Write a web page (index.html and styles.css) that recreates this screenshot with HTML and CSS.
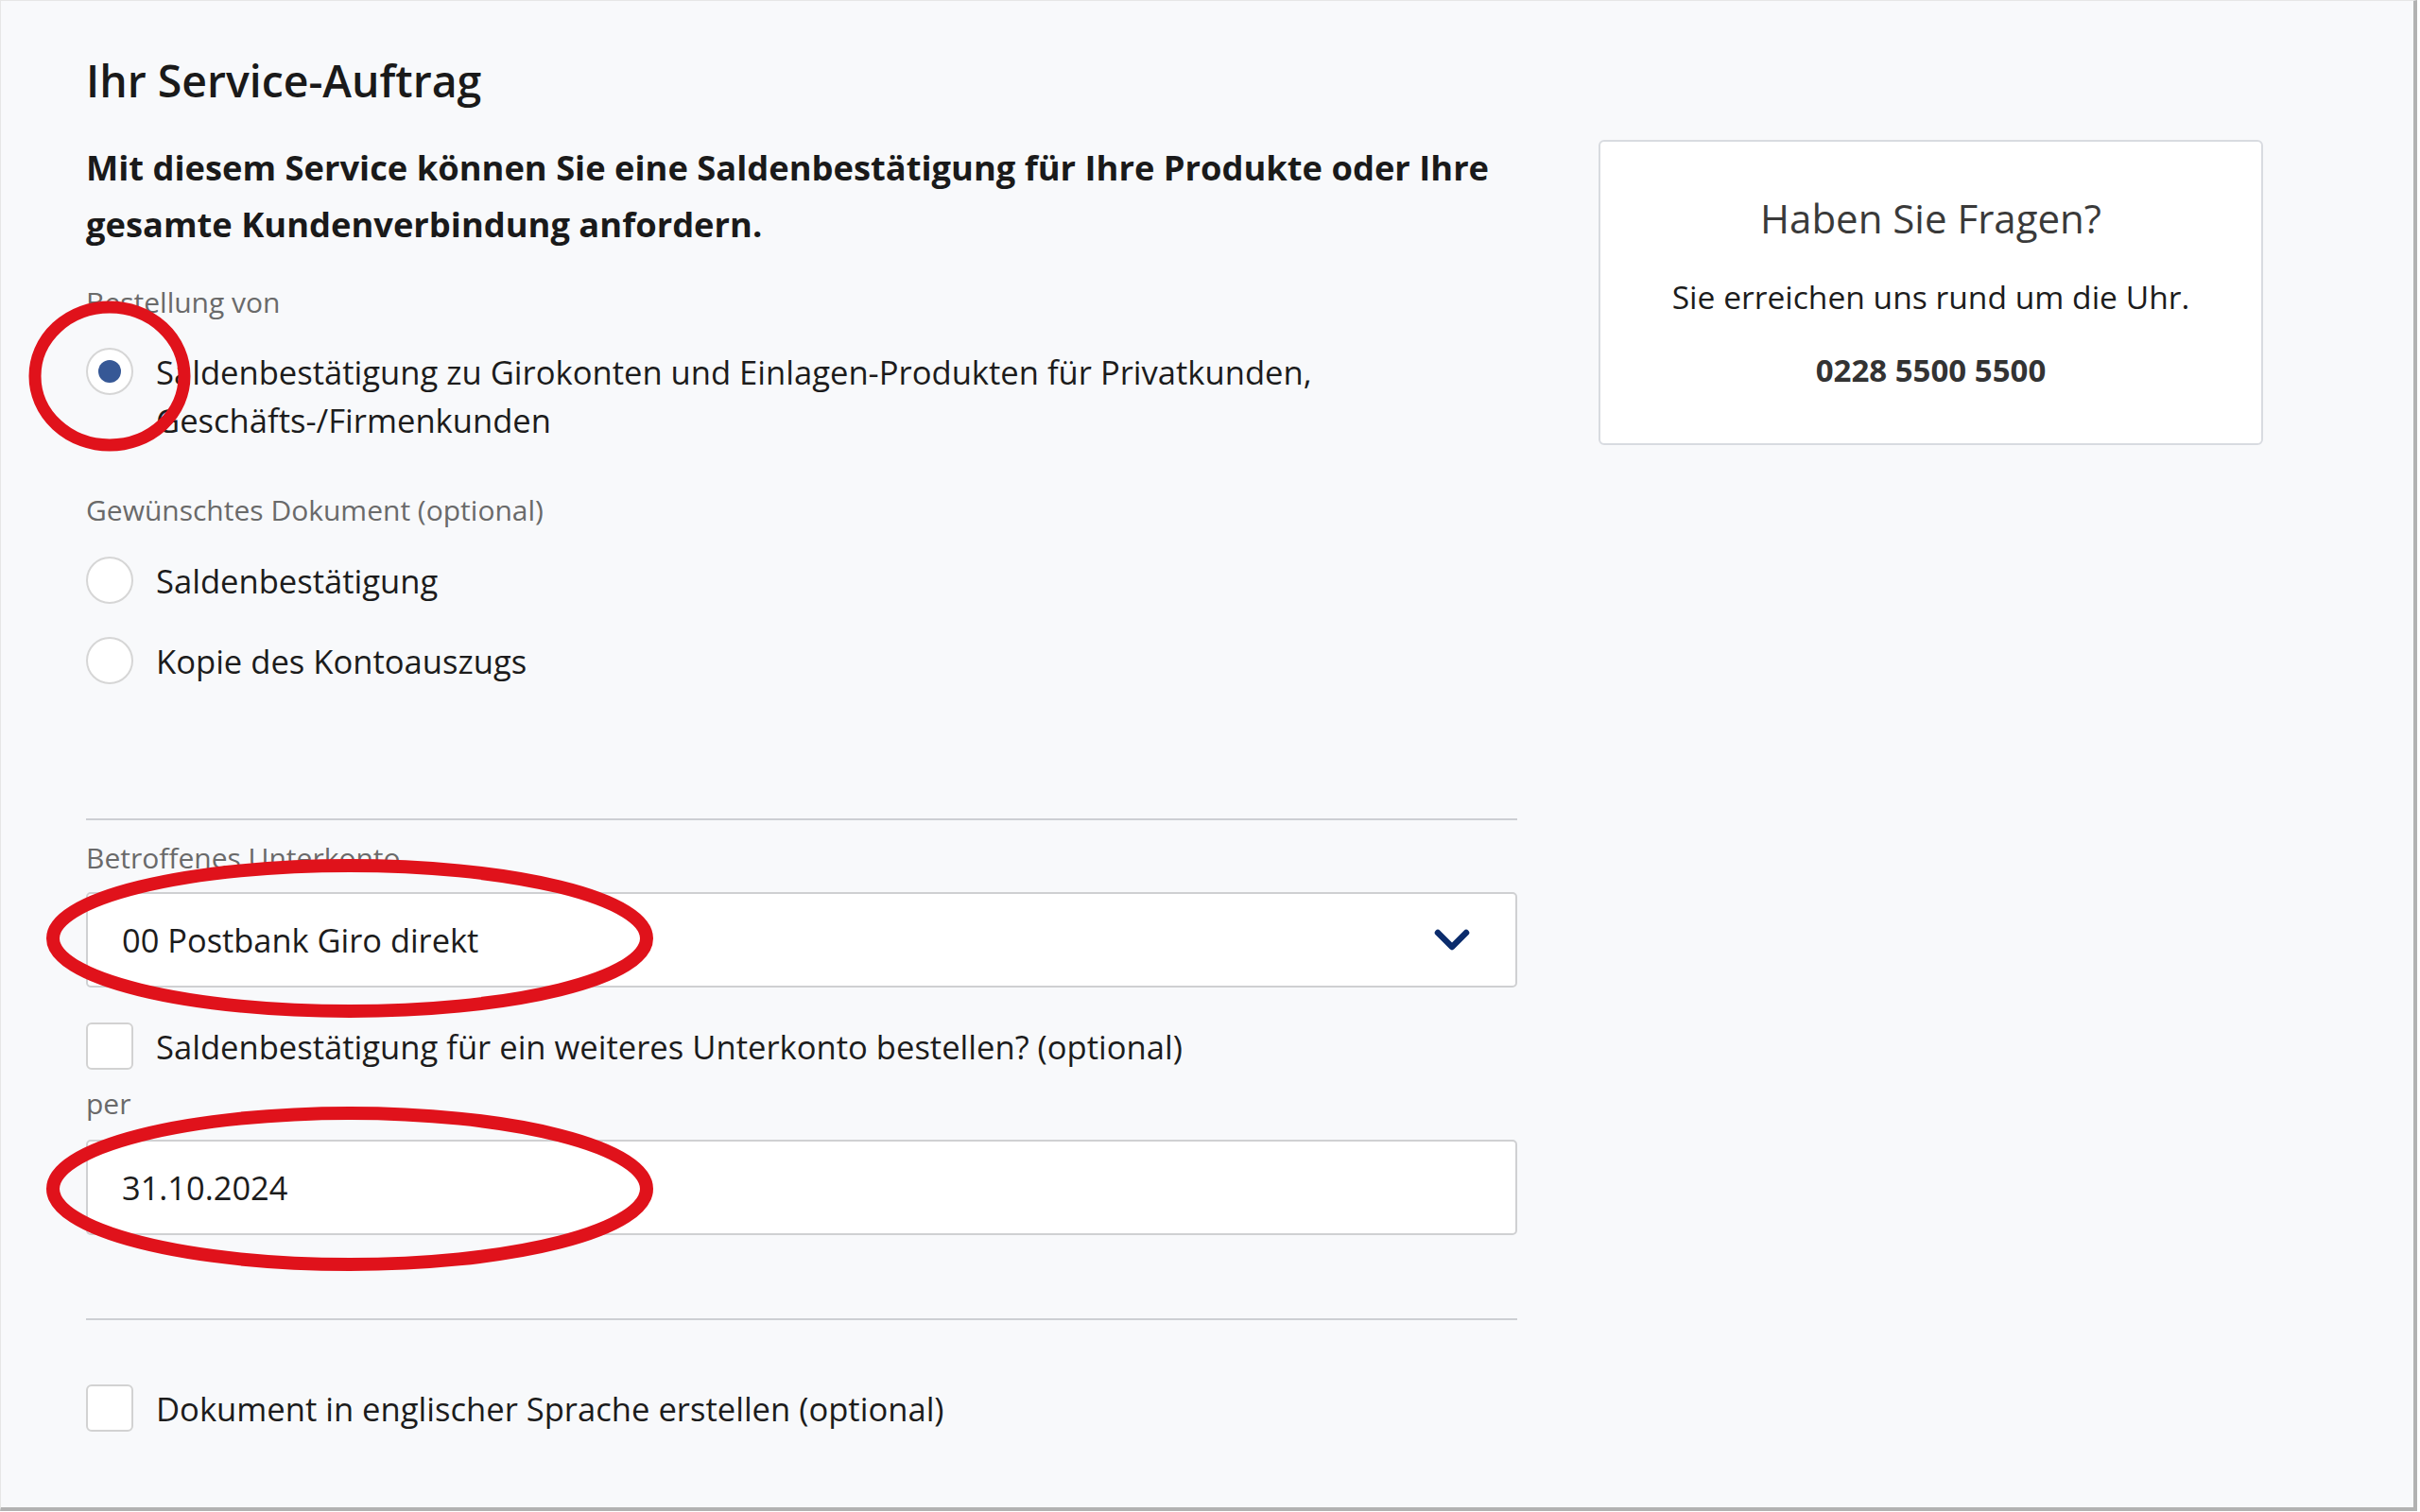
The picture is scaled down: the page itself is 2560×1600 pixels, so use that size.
FILE: index.html
```html
<!DOCTYPE html>
<html lang="de">
  <head>
    <meta charset="UTF-8" />
    <meta name="viewport" content="width=device-width, initial-scale=1.0" />
    <title>Ihr Service-Auftrag</title>
    <link rel="stylesheet" href="styles.css">
  </head>
  <body>
    <div class="frame">
      <div class="page">
        <!-- Formular -->
        <main class="main">
          <h1 class="title">Ihr Service-Auftrag</h1>
          <p class="intro">Mit diesem Service können Sie eine Saldenbestätigung für Ihre Produkte oder Ihre gesamte Kundenverbindung anfordern.</p>

          <div class="label label-order">Bestellung von</div>
          <label class="option option-first">
            <span class="radio checked"></span>
            <span class="option-text">Saldenbestätigung zu Girokonten und Einlagen-Produkten für Privatkunden, Geschäfts-/Firmenkunden</span>
          </label>

          <div class="label label-doc">Gewünschtes Dokument (optional)</div>
          <label class="option option-doc">
            <span class="radio"></span>
            <span class="option-text">Saldenbestätigung</span>
          </label>
          <label class="option option-copy">
            <span class="radio"></span>
            <span class="option-text">Kopie des Kontoauszugs</span>
          </label>

          <hr class="divider divider-top">

          <div class="label label-account">Betroffenes Unterkonto</div>
          <div class="field select">
            <span>00 Postbank Giro direkt</span>
            <svg class="chevron" width="38" height="24" viewBox="0 0 38 24">
              <path d="M4 4 L19 19 L34 4" fill="none" stroke="#0b2c6c" stroke-width="6.5" stroke-linecap="round" stroke-linejoin="round"/>
            </svg>
          </div>

          <label class="option option-more">
            <span class="checkbox"></span>
            <span class="option-text">Saldenbestätigung für ein weiteres Unterkonto bestellen? (optional)</span>
          </label>

          <div class="label label-per">per</div>
          <div class="field date">31.10.2024</div>

          <hr class="divider divider-bottom">

          <label class="option option-english">
            <span class="checkbox"></span>
            <span class="option-text">Dokument in englischer Sprache erstellen (optional)</span>
          </label>
        </main>

        <!-- Kontakt -->
        <aside class="help">
          <div class="help-title">Haben Sie Fragen?</div>
          <div class="help-text">Sie erreichen uns rund um die Uhr.</div>
          <div class="help-phone">0228 5500 5500</div>
        </aside>
      </div>

      <!-- rote Markierungen -->
      <svg class="marks" width="2560" height="1600" viewBox="0 0 2560 1600">
        <ellipse cx="116" cy="398" rx="79" ry="73" fill="none" stroke="#e0121b" stroke-width="13"/>
        <ellipse cx="370" cy="993" rx="314" ry="77" fill="none" stroke="#e0121b" stroke-width="14"/>
        <ellipse cx="370" cy="1258" rx="314" ry="80" fill="none" stroke="#e0121b" stroke-width="14"/>
      </svg>
    </div>
  </body>
</html>
```

FILE: styles.css
```css
body {
  margin: 0;
  background: #ffffff;
  font-family: 'Open Sans', 'Noto Sans', sans-serif;
  color: #1c1c1c;
}

.frame {
  position: relative;
  box-sizing: border-box;
  width: 2557px;
  height: 1599px;
  background: #f8f9fb;
  border-left: 1px solid #e6e6e6;
  border-top: 1px solid #e6e6e6;
  border-right: 4px solid #b2b2b2;
  border-bottom: 4px solid #b2b2b2;
  overflow: hidden;
}

.page {
  display: flex;
  gap: 86px;
  padding-left: 90px;
}

.main {
  width: 1514px;
  padding-top: 54px;
}

.title {
  margin: 0;
  font-size: 46.4px;
  line-height: 60px;
  font-weight: 600;
  color: #1a1a1a;
}

.intro {
  margin: 32px 0 0;
  font-size: 36.3px;
  line-height: 60px;
  font-weight: 700;
  color: #1a1a1a;
}

.label {
  font-size: 30px;
  line-height: 40px;
  color: #6a6a6a;
}

.label-order {
  margin-top: 33px;
}

.label-doc {
  margin-top: 50px;
}

.label-account {
  margin-top: 20px;
}

.label-per {
  margin-top: 15px;
}

.option {
  display: flex;
  align-items: flex-start;
  gap: 24px;
  font-size: 34.6px;
  line-height: 51px;
  color: #1c1c1c;
}

.option-first {
  margin-top: 28px;
}

.option-doc {
  margin-top: 29px;
}

.option-copy {
  margin-top: 34px;
}

.option-more {
  margin-top: 37px;
}

.option-english {
  margin-top: 68px;
}

.radio {
  flex: none;
  box-sizing: border-box;
  width: 50px;
  height: 50px;
  border: 2px solid #d6d6d6;
  border-radius: 50%;
  background: #ffffff;
  display: flex;
  align-items: center;
  justify-content: center;
}

.radio.checked::after {
  content: "";
  width: 24px;
  height: 24px;
  border-radius: 50%;
  background: #365896;
}

.checkbox {
  flex: none;
  box-sizing: border-box;
  width: 50px;
  height: 50px;
  border: 2px solid #d2d2d2;
  border-radius: 6px;
  background: #ffffff;
}

.divider {
  margin: 0;
  border: none;
  border-top: 2px solid #cdcfd3;
}

.divider-top {
  margin-top: 141px;
}

.divider-bottom {
  margin-top: 88px;
}

.field {
  box-sizing: border-box;
  height: 101px;
  margin-top: 16px;
  padding: 0 48px 0 36px;
  display: flex;
  align-items: center;
  justify-content: space-between;
  background: #ffffff;
  border: 2px solid #cfd0d2;
  border-radius: 5px;
  font-size: 34.4px;
  color: #1c1c1c;
}

.date {
  margin-top: 18px;
}

.help {
  box-sizing: border-box;
  width: 703px;
  height: 323px;
  margin-top: 147px;
  background: #ffffff;
  border: 2px solid #d8dbe0;
  border-radius: 6px;
  text-align: center;
  color: #2e2e2e;
  padding-top: 53px;
}

.help-title {
  font-size: 42px;
  line-height: 56px;
  color: #3a3a3a;
}

.help-text {
  margin-top: 30px;
  font-size: 33.6px;
  line-height: 50px;
  color: #1c1c1c;
}

.help-phone {
  margin-top: 28px;
  font-size: 33px;
  line-height: 50px;
  font-weight: 700;
  color: #333333;
}

.marks {
  position: absolute;
  left: -1px;
  top: -1px;
  pointer-events: none;
}
```
